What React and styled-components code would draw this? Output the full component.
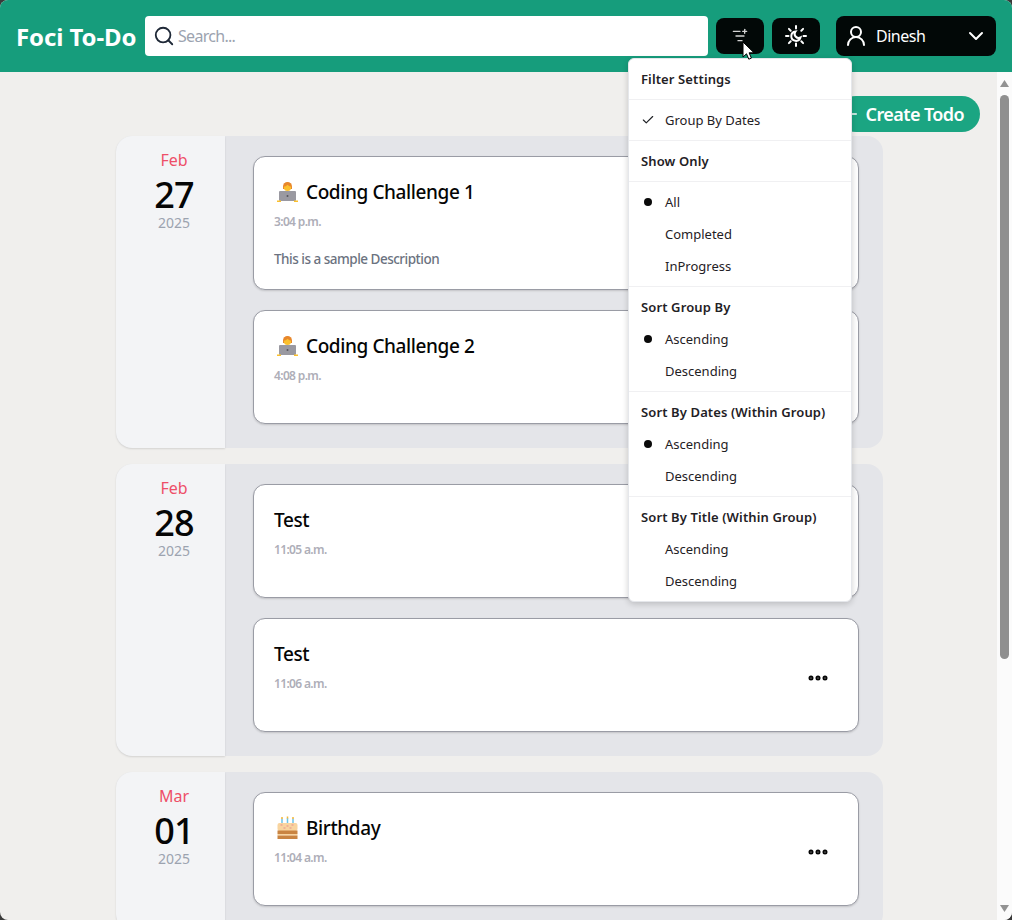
import React from "react";
import styled, { createGlobalStyle } from "styled-components";
import { Search, ListFilterPlus, UserRound, ChevronDown, Check, Ellipsis, Plus } from "lucide-react";

const FONT = `"Noto Sans", "Open Sans", sans-serif`;

const Global = createGlobalStyle`
  html, body { margin: 0; padding: 0; height: 920px; overflow: hidden; background: #3a3a3a; }
  * { box-sizing: border-box; }
  #root { height: 920px; }
`;

const Frame = styled.div`
  position: relative;
  height: 920px;
  display: flex;
  flex-direction: column;
  border-radius: 8px;
  overflow: hidden;
  font-family: ${FONT};
  background: #f0efed;
`;

const Header = styled.header`
  height: 72px;
  flex: none;
  background: #169d7c;
  display: flex;
  align-items: center;
  padding: 0 16px;
`;

const Brand = styled.div`
  color: #fff;
  font-size: 24px;
  font-weight: 700;
  letter-spacing: -0.1px;
  width: 129px;
  white-space: nowrap;
`;

const SearchBox = styled.div`
  flex: 1;
  height: 40px;
  background: #fff;
  border-radius: 4px;
  display: flex;
  align-items: center;
  gap: 3px;
  padding-left: 8px;
  color: #1f2937;
  margin-right: 8px;
`;

const Placeholder = styled.span`
  color: #9ca3af;
  font-size: 16px;
  letter-spacing: -0.7px;
`;

const IconButton = styled.div`
  width: 48px;
  height: 36px;
  border-radius: 8px;
  background: #020807;
  color: ${(p) => p.$color || "#fff"};
  display: flex;
  align-items: center;
  justify-content: center;
  margin-right: 8px;
`;

const UserButton = styled.div`
  width: 160px;
  height: 40px;
  margin-left: 8px;
  border-radius: 8px;
  background: #020807;
  color: #fff;
  display: flex;
  align-items: center;
  padding: 0 8px;
  font-size: 16px;
  letter-spacing: -0.5px;
`;

const UserName = styled.span`
  flex: 1;
  margin-left: 8px;
`;

const Body = styled.div`
  flex: 1;
  min-height: 0;
  display: flex;
`;

const Main = styled.main`
  flex: 1;
  min-width: 0;
  overflow: hidden;
  padding: 24px 17px 0 116px;
`;

const Rail = styled.div`
  width: 15px;
  flex: none;
  background: #fbfbfb;
  display: flex;
  flex-direction: column;
  align-items: center;
  padding: 8px 0;
  color: #929292;
`;

const RailThumb = styled.div`
  width: 9px;
  height: 564px;
  margin-top: 8px;
  border-radius: 5px;
  background: #8f8f8f;
`;

const RailEnd = styled.svg`
  display: block;
  flex: none;
  margin-top: ${(p) => (p.$bottom ? "auto" : "0")};
`;

const Toolbar = styled.div`
  display: flex;
  justify-content: flex-end;
  height: 36px;
  margin-bottom: 4px;
`;

const CreateButton = styled.div`
  height: 36px;
  width: 142px;
  border-radius: 18px;
  background: #1ba582;
  color: #fff;
  font-size: 18px;
  font-weight: 600;
  letter-spacing: -0.6px;
  display: flex;
  align-items: center;
  justify-content: flex-end;
  gap: 6px;
  padding-right: 16px;
  white-space: nowrap;
`;

const Groups = styled.div`
  width: 767px;
  display: flex;
  flex-direction: column;
  gap: 16px;
`;

const Group = styled.section`
  display: flex;
  background: #e4e5e9;
  border-radius: 16px;
`;

const DateCol = styled.div`
  width: 109px;
  flex: none;
  background: #f3f4f6;
  border-radius: 16px 0 0 16px;
  box-shadow: 0 1px 2px rgba(0, 0, 0, 0.12);
  display: flex;
  flex-direction: column;
  align-items: center;
  padding: 13px 0 0 7px;
`;

const Month = styled.div`
  color: #ee4f68;
  font-size: 16px;
  line-height: 22px;
`;

const Day = styled.div`
  color: #050505;
  font-size: 36px;
  font-weight: 500;
  line-height: 40px;
  margin-top: 4px;
  letter-spacing: -0.8px;
`;

const Year = styled.div`
  color: #9ca3af;
  font-size: 14px;
  line-height: 16px;
`;

const Cards = styled.div`
  flex: 1;
  display: flex;
  flex-direction: column;
  gap: 20px;
  padding: 20px 24px 24px 28px;
`;

const Card = styled.article`
  position: relative;
  min-height: 114px;
  background: #fff;
  border: 1px solid #9a9ca5;
  border-radius: 12px;
  box-shadow: 0 1px 2px rgba(0, 0, 0, 0.15);
  padding: 20px;
  display: flex;
  justify-content: space-between;
`;

const CardBody = styled.div`
  min-width: 0;
`;

const Title = styled.div`
  display: flex;
  align-items: center;
  gap: 8px;
  color: #050505;
  font-size: 19px;
  font-weight: 500;
  line-height: 30px;
  height: 30px;
  letter-spacing: -0.4px;
`;

const Time = styled.div`
  color: #aeaeb8;
  font-size: 12px;
  font-weight: 600;
  line-height: 18px;
  margin-top: 6px;
  letter-spacing: -0.65px;
`;

const Desc = styled.div`
  color: #6b7280;
  font-size: 13.5px;
  font-weight: 500;
  line-height: 20px;
  margin-top: 18px;
  letter-spacing: -0.5px;
`;

const More = styled.div`
  align-self: center;
  margin: 0 8px 0 0;
  color: #050505;
  display: flex;
  position: relative;
  top: 3px;
`;

const Menu = styled.div`
  position: absolute;
  left: 628px;
  top: 58px;
  width: 224px;
  background: #fff;
  border: 1px solid #e5e7eb;
  border-radius: 6px;
  box-shadow: 0 2px 6px rgba(0, 0, 0, 0.18);
  font-size: 14px;
  color: #1f2125;
`;

const MenuSection = styled.div`
  padding: 4px 0;
  & + & { border-top: 1px solid #f0f0f2; }
`;

const MenuLabel = styled.div`
  height: 32px;
  display: flex;
  align-items: center;
  padding-left: 12px;
  font-weight: 600;
  font-size: 13px;
  letter-spacing: 0.12px;
  white-space: nowrap;
`;

const MenuItem = styled.div`
  height: 32px;
  display: flex;
  align-items: center;
  padding-left: 36px;
  position: relative;
  font-size: 13px;
  white-space: nowrap;
`;

const Indicator = styled.span`
  position: absolute;
  left: 12px;
  top: 0;
  bottom: 0;
  width: 14px;
  display: flex;
  align-items: center;
  justify-content: center;
`;

const Dot = styled.span`
  width: 8px;
  height: 8px;
  border-radius: 50%;
  background: #0a0a0a;
`;

const Pointer = styled.svg`
  position: absolute;
  left: 742px;
  top: 41px;
`;

const SunMoonIcon = () => (
  <svg width="24" height="24" viewBox="0 0 24 24" fill="none" stroke="currentColor" strokeWidth="2" strokeLinecap="round" aria-hidden="true">
    <path d="M12 2v2.500M12 19.500V22M2 12h2.500M19.500 12H22M4.900 4.900l1.800 1.800M17.300 17.300l1.800 1.800M4.900 19.100l1.800-1.800M17.300 6.700l1.800-1.800" />
    <path d="M11.500 7.500a4.700 4.700 0 1 0 5 6 4 4 0 0 1-5-6z" />
  </svg>
);

const Coder = () => (
  <svg width="24" height="24" viewBox="0 0 24 24" aria-hidden="true">
    <g transform="translate(1.500 0)">
      <path d="M7.500 6.500a4.500 4.500 0 0 1 9 0v2.500h-9z" fill="#e8872b" />
      <circle cx="12" cy="7.500" r="3.600" fill="#fbc02d" />
      <path d="M8.400 6.500c1.500 0 3-1 3.800-1.800.7 1 2 1.800 3.400 1.800l-.2-2.600-3.400-1.600-3.400 1.600z" fill="#e8872b" />
      <rect x="3.500" y="11" width="17" height="10" rx="1" fill="#9a99a1" />
      <circle cx="12" cy="16" r="1" fill="#55545c" />
      <path d="M1.500 20.500h4V22h-4zM18.500 20.500h4V22h-4z" fill="#fbc02d" />
    </g>
  </svg>
);

const Cake = () => (
  <svg width="24" height="24" viewBox="0 0 24 24" aria-hidden="true">
    <g transform="translate(1.500 0)">
      <path d="M6.500 2.500v6M12 2v6M17.500 2.500v6" stroke="#6cc3e8" strokeWidth="1.500" />
      <path d="M6.500 1v2M12 .5v2M17.500 1v2" stroke="#f7b733" strokeWidth="1.500" />
      <rect x="2" y="7" width="20" height="8" rx="2" fill="#f8d49f" />
      <path d="M5 9h2M11 10h2M16 9h2M8 12h2M14 12h2" stroke="#e58f8f" strokeWidth="1" />
      <rect x="2" y="14.500" width="20" height="3.500" fill="#c98442" />
      <rect x="2" y="18" width="20" height="1.500" fill="#f8d49f" />
      <rect x="2" y="19.500" width="20" height="3.500" fill="#c98442" />
    </g>
  </svg>
);

const todos = [
  { month: "Feb", day: "27", items: [
    { emoji: <Coder />, title: "Coding Challenge 1", time: "3:04 p.m.", desc: "This is a sample Description" },
    { emoji: <Coder />, title: "Coding Challenge 2", time: "4:08 p.m." },
  ]},
  { month: "Feb", day: "28", items: [
    { title: "Test", time: "11:05 a.m." },
    { title: "Test", time: "11:06 a.m." },
  ]},
  { month: "Mar", day: "01", items: [
    { emoji: <Cake />, title: "Birthday", time: "11:04 a.m." },
  ]},
];

const menu = [
  { label: "Filter Settings" },
  { items: [{ text: "Group By Dates", mark: "check" }] },
  { label: "Show Only" },
  { items: [{ text: "All", mark: "dot" }, { text: "Completed" }, { text: "InProgress" }] },
  { label: "Sort Group By", items: [{ text: "Ascending", mark: "dot" }, { text: "Descending" }] },
  { label: "Sort By Dates (Within Group)", items: [{ text: "Ascending", mark: "dot" }, { text: "Descending" }] },
  { label: "Sort By Title (Within Group)", items: [{ text: "Ascending" }, { text: "Descending" }] },
];

export default function App() {
  return (
    <>
      <Global />
      <Frame>
        <Header>
          <Brand>Foci To-Do</Brand>
          <SearchBox>
            <Search size={22} strokeWidth={2} />
            <Placeholder>Search...</Placeholder>
          </SearchBox>
          <IconButton $color="#d4d4d4"><ListFilterPlus size={16} /></IconButton>
          <IconButton><SunMoonIcon /></IconButton>
          <UserButton>
            <UserRound size={24} />
            <UserName>Dinesh</UserName>
            <ChevronDown size={24} />
          </UserButton>
        </Header>
        <Body>
          <Main>
            <Toolbar>
              <CreateButton><Plus size={18} />Create Todo</CreateButton>
            </Toolbar>
            <Groups>
              {todos.map((g) => (
                <Group key={g.day}>
                  <DateCol>
                    <Month>{g.month}</Month>
                    <Day>{g.day}</Day>
                    <Year>2025</Year>
                  </DateCol>
                  <Cards>
                    {g.items.map((t) => (
                      <Card key={t.time}>
                        <CardBody>
                          <Title>{t.emoji}{t.title}</Title>
                          <Time>{t.time}</Time>
                          {t.desc && <Desc>{t.desc}</Desc>}
                        </CardBody>
                        <More><Ellipsis size={24} strokeWidth={3} /></More>
                      </Card>
                    ))}
                  </Cards>
                </Group>
              ))}
            </Groups>
          </Main>
          <Rail>
            <RailEnd width="9" height="7" viewBox="0 0 9 7" aria-hidden="true"><path d="M0 7 L4.500 0 L9 7 Z" fill="currentColor" /></RailEnd>
            <RailThumb />
            <RailEnd $bottom width="9" height="7" viewBox="0 0 9 7" aria-hidden="true"><path d="M0 0 L9 0 L4.500 7 Z" fill="currentColor" /></RailEnd>
          </Rail>
        </Body>
        <Menu>
          {menu.map((s, i) => (
            <MenuSection key={i}>
              {s.label && <MenuLabel>{s.label}</MenuLabel>}
              {s.items && s.items.map((it) => (
                <MenuItem key={it.text}>
                  {it.mark && (
                    <Indicator>
                      {it.mark === "dot" ? <Dot /> : <Check size={16} />}
                    </Indicator>
                  )}
                  {it.text}
                </MenuItem>
              ))}
            </MenuSection>
          ))}
        </Menu>
        <Pointer width="14" height="22" viewBox="0 0 14 22" aria-hidden="true">
          <path d="M1 1v15l3.500-3.200 2.300 5.400 2.600-1.100-2.300-5.300H12z" fill="#fff" stroke="#000" strokeWidth="1" strokeLinejoin="miter" />
        </Pointer>
      </Frame>
    </>
  );
}
